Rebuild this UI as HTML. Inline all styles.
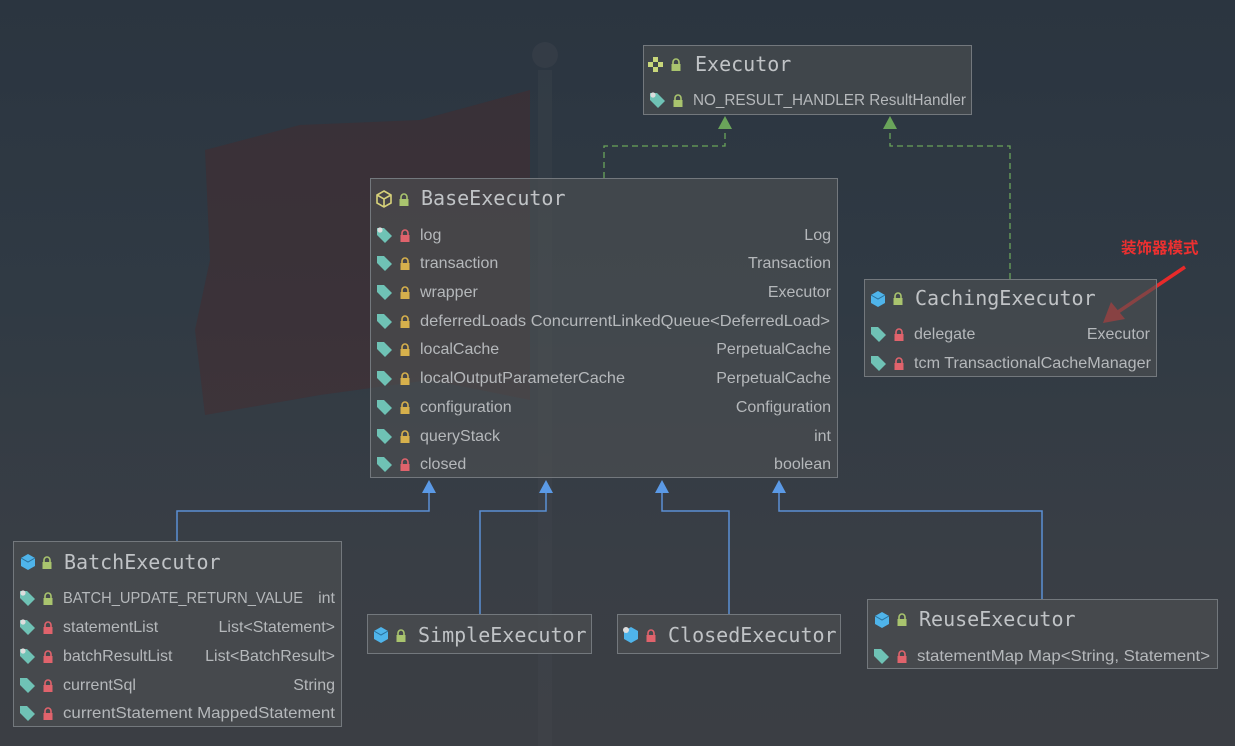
<!DOCTYPE html>
<html><head><meta charset="utf-8">
<style>
*{margin:0;padding:0;box-sizing:border-box}
body{width:1235px;height:746px;overflow:hidden;position:relative;background:linear-gradient(180deg,#2b3540 0%,#303a44 40%,#393e45 75%,#3b3e44 100%);font-family:"Liberation Sans","DejaVu Sans",sans-serif;color:#b8bbbe}
.box{position:absolute;background:rgba(78,80,83,0.62);border:1px solid #73787d}
.t{position:absolute;font-family:"DejaVu Sans Mono","Liberation Mono",monospace;font-size:20px;color:#c0c3c6;white-space:nowrap;line-height:22px}
.r{position:absolute;font-size:16px;white-space:nowrap;line-height:18px;color:#b5b8bb;transform-origin:0 50%}
.rt{position:absolute;font-size:16px;white-space:nowrap;line-height:18px;text-align:right;color:#b5b8bb}
svg.i{position:absolute}
</style></head><body>
<svg width="1235" height="746" style="position:absolute;left:0;top:0">
<path d="M205,150 L300,125 L420,120 L530,90 L530,400 L430,380 L320,395 L205,415 L195,330 L210,260 Z" fill="#4a2a2c" opacity="0.45"/>
<rect x="538" y="70" width="14" height="680" fill="#4c5257" opacity="0.2"/>
<circle cx="545" cy="55" r="13" fill="#4a5056" opacity="0.25"/>
<g stroke="#6aa45a" stroke-width="1.3" fill="none" stroke-dasharray="6,4">
<path d="M604,178 V146 H725 V128"/>
<path d="M1010,279 V146 H890 V128"/>
</g>
<path d="M718,129 L725,116 L732,129 Z" fill="#6aa45a"/>
<path d="M883,129 L890,116 L897,129 Z" fill="#6aa45a"/>
<g stroke="#5b8fd4" stroke-width="1.5" fill="none">
<path d="M177,541 V511 H429 V490"/>
<path d="M480,614 V511 H546 V490"/>
<path d="M729,614 V511 H662 V490"/>
<path d="M1042,599 V511 H779 V490"/>
</g>
<g fill="#5b9ae6">
<path d="M422,493 L429,480 L436,493Z"/><path d="M539,493 L546,480 L553,493Z"/><path d="M655,493 L662,480 L669,493Z"/><path d="M772,493 L779,480 L786,493Z"/>
</g>
<path d="M1185,267 L1118,312" stroke="#e82a2a" stroke-width="3.5"/>
<path d="M1103,323 L1111,302 L1125,319 Z" fill="#e82a2a"/>
<text x="1121" y="253" font-family="Noto Sans CJK SC,sans-serif" font-weight="bold" font-size="15.5" fill="#ec3030">装饰器模式</text>
</svg>

<div class="box" style="left:643px;top:45px;width:329px;height:70px"></div>
<svg class="i" style="left:648px;top:57px" width="18" height="16"><g fill="#c8d67a"><rect x="5" y="0" width="5" height="5"/><rect x="0" y="5" width="5" height="5"/><rect x="10" y="5" width="5" height="5"/><rect x="5" y="10" width="5" height="5"/></g></svg>
<svg class="i" style="left:671px;top:58px" width="10" height="13"><path d="M2,6 V4 a3,3 0 0 1 6,0 V6" stroke="#a9c46e" stroke-width="1.6" fill="none"/><rect x="0.5" y="6" width="9" height="7" fill="#a9c46e"/></svg>
<div class="t" style="left:695px;top:53px">Executor</div>

<div class="box" style="left:370px;top:178px;width:468px;height:300px"></div>
<svg class="i" style="left:375px;top:190px" width="18" height="18"><path d="M9,1 L16,5 V13 L9,17 L2,13 V5 Z M2,5 L9,9 L16,5 M9,9 V17" stroke="#d8d27a" stroke-width="1.6" fill="none"/></svg>
<svg class="i" style="left:399px;top:193px" width="10" height="13"><path d="M2,6 V4 a3,3 0 0 1 6,0 V6" stroke="#a9c46e" stroke-width="1.6" fill="none"/><rect x="0.5" y="6" width="9" height="7" fill="#a9c46e"/></svg>
<div class="t" style="left:421px;top:187px">BaseExecutor</div>

<div class="box" style="left:864px;top:279px;width:293px;height:98px"></div>
<svg class="i" style="left:869px;top:290px" width="18" height="18"><path d="M9,1 L16,5 V13 L9,17 L2,13 V5 Z" fill="#4fb4ea"/><path d="M2,5 L9,9 L16,5" stroke="#2a6f99" stroke-width="1" fill="none"/></svg>
<svg class="i" style="left:893px;top:292px" width="10" height="13"><path d="M2,6 V4 a3,3 0 0 1 6,0 V6" stroke="#a9c46e" stroke-width="1.6" fill="none"/><rect x="0.5" y="6" width="9" height="7" fill="#a9c46e"/></svg>
<div class="t" style="left:915px;top:287px">CachingExecutor</div>

<div class="box" style="left:13px;top:541px;width:329px;height:186px"></div>
<svg class="i" style="left:19px;top:553px" width="18" height="18"><path d="M9,1 L16,5 V13 L9,17 L2,13 V5 Z" fill="#4fb4ea"/><path d="M2,5 L9,9 L16,5" stroke="#2a6f99" stroke-width="1" fill="none"/></svg>
<svg class="i" style="left:42px;top:556px" width="10" height="13"><path d="M2,6 V4 a3,3 0 0 1 6,0 V6" stroke="#a9c46e" stroke-width="1.6" fill="none"/><rect x="0.5" y="6" width="9" height="7" fill="#a9c46e"/></svg>
<div class="t" style="left:64px;top:551px">BatchExecutor</div>

<div class="box" style="left:367px;top:614px;width:225px;height:40px"></div>
<svg class="i" style="left:372px;top:626px" width="18" height="18"><path d="M9,1 L16,5 V13 L9,17 L2,13 V5 Z" fill="#4fb4ea"/><path d="M2,5 L9,9 L16,5" stroke="#2a6f99" stroke-width="1" fill="none"/></svg>
<svg class="i" style="left:396px;top:629px" width="10" height="13"><path d="M2,6 V4 a3,3 0 0 1 6,0 V6" stroke="#a9c46e" stroke-width="1.6" fill="none"/><rect x="0.5" y="6" width="9" height="7" fill="#a9c46e"/></svg>
<div class="t" style="left:418px;top:624px">SimpleExecutor</div>

<div class="box" style="left:617px;top:614px;width:224px;height:40px"></div>
<svg class="i" style="left:622px;top:626px" width="18" height="18"><path d="M9,1 L16,5 V13 L9,17 L2,13 V5 Z" fill="#4fb4ea"/><circle cx="4" cy="4" r="3" fill="#ddd"/></svg>
<svg class="i" style="left:646px;top:629px" width="10" height="13"><path d="M2,6 V4 a3,3 0 0 1 6,0 V6" stroke="#e0636c" stroke-width="1.6" fill="none"/><rect x="0.5" y="6" width="9" height="7" fill="#e0636c"/></svg>
<div class="t" style="left:668px;top:624px">ClosedExecutor</div>

<div class="box" style="left:867px;top:599px;width:351px;height:70px"></div>
<svg class="i" style="left:873px;top:611px" width="18" height="18"><path d="M9,1 L16,5 V13 L9,17 L2,13 V5 Z" fill="#4fb4ea"/><path d="M2,5 L9,9 L16,5" stroke="#2a6f99" stroke-width="1" fill="none"/></svg>
<svg class="i" style="left:897px;top:613px" width="10" height="13"><path d="M2,6 V4 a3,3 0 0 1 6,0 V6" stroke="#a9c46e" stroke-width="1.6" fill="none"/><rect x="0.5" y="6" width="9" height="7" fill="#a9c46e"/></svg>
<div class="t" style="left:919px;top:608px">ReuseExecutor</div>

<div id="rows"></div>
<script>
function tag(x,y,gear){return '<svg class="i" style="left:'+x+'px;top:'+(y-9)+'px" width="18" height="18"><path d="M1,2 H8 L16,10 L9,17 L1,9Z" fill="#6fc2b5"/>'+(gear?'<circle cx="4" cy="4" r="2.6" fill="#ddd"/>':'')+'</svg>';}
function lock(x,y,c){var col={g:'#a9c46e',r:'#e0636c',y:'#d6b04c'}[c];return '<svg class="i" style="left:'+x+'px;top:'+(y-6)+'px" width="10" height="13"><path d="M2,6 V4 a3,3 0 0 1 6,0 V6" stroke="'+col+'" stroke-width="1.6" fill="none"/><rect x="0.5" y="6" width="9" height="7" fill="'+col+'"/></svg>';}
var fits=[];var n=0;
function rows(L,R,list){var h='';list.forEach(function(o){var y=o[0];h+=tag(L+6,y,o[4])+lock(L+30,y,o[3]);var id='f'+(n++);h+='<div class="r" id="'+id+'" style="left:'+(L+50)+'px;top:'+(y-8)+'px">'+o[1]+'</div>';if(o[5])fits.push([id,o[5]]);if(o[2])h+='<div class="rt" style="right:'+(1235-R+7)+'px;top:'+(y-8)+'px">'+o[2]+'</div>';});return h;}
var h='';
h+=rows(643,972,[[100,'NO_RESULT_HANDLER ResultHandler','','g',1,273]]);
h+=rows(370,838,[[235,'log','Log','r',1],[263,'transaction','Transaction','y'],[292,'wrapper','Executor','y'],[321,'deferredLoads ConcurrentLinkedQueue&lt;DeferredLoad&gt;','','y',0,410],[349,'localCache','PerpetualCache','y'],[378,'localOutputParameterCache','PerpetualCache','y',0,205],[407,'configuration','Configuration','y'],[436,'queryStack','int','y'],[464,'closed','boolean','r']]);
h+=rows(864,1157,[[334,'delegate','Executor','r'],[363,'tcm TransactionalCacheManager','','r',0,237]]);
h+=rows(13,342,[[598,'BATCH_UPDATE_RETURN_VALUE','int','g',1,240],[627,'statementList','List&lt;Statement&gt;','r',1],[656,'batchResultList','List&lt;BatchResult&gt;','r',1],[685,'currentSql','String','r'],[713,'currentStatement MappedStatement','','r',0,272]]);
h+=rows(867,1218,[[656,'statementMap Map&lt;String, Statement&gt;','','r',0,293]]);
document.getElementById('rows').outerHTML=h;
fits.forEach(function(f){var e=document.getElementById(f[0]);var w=e.getBoundingClientRect().width;e.style.transform='scaleX('+(f[1]/w)+')';});
</script>
</body></html>
